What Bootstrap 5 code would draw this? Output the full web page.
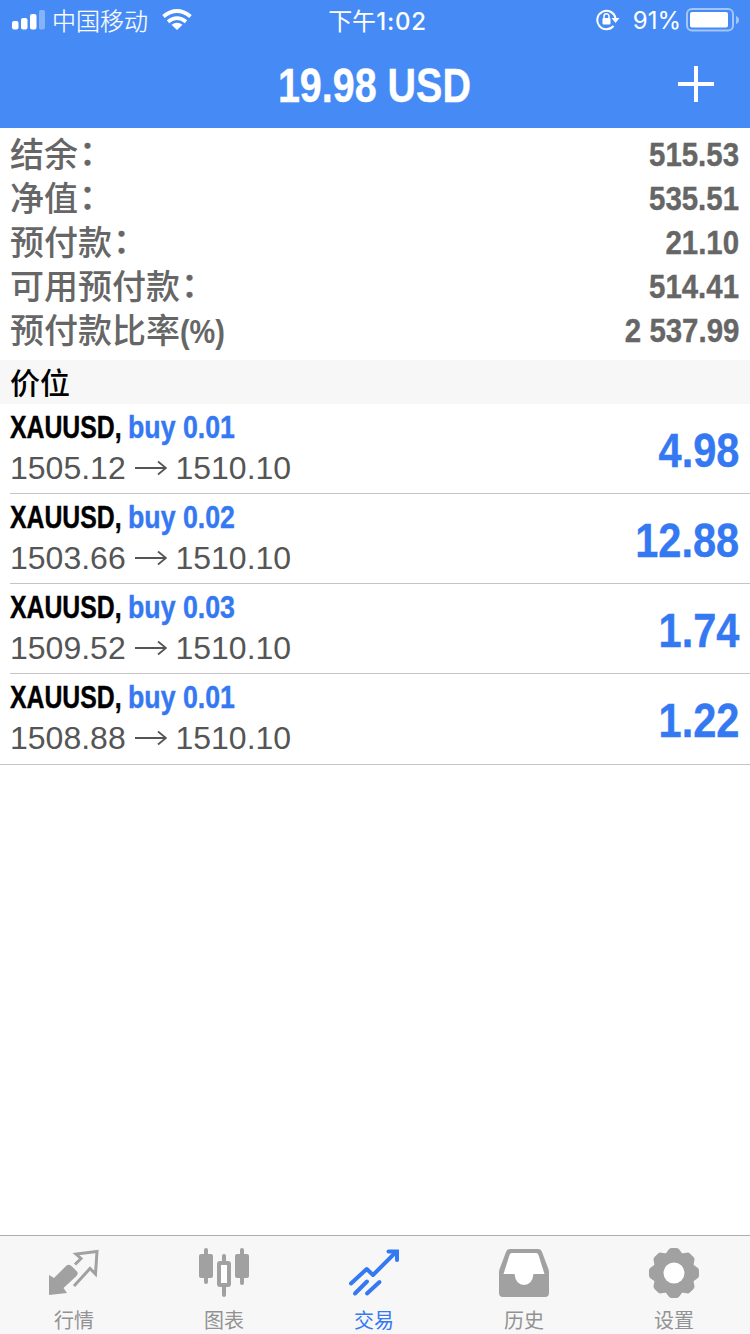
<!DOCTYPE html>
<html lang="zh-CN">
<head>
<meta charset="utf-8">
<meta name="viewport" content="width=device-width, initial-scale=1">
<title>交易</title>
<link href="https://cdn.jsdelivr.net/npm/bootstrap@5.3.0/dist/css/bootstrap.min.css" rel="stylesheet">
<style>
:root{--sky:#468bf5;--buy:#3478f2}
body{font-family:"Liberation Sans","Noto Sans CJK SC",sans-serif;color:#000;background:#fff;overflow:hidden}
/* condensed bold: regular-width glyphs squeezed horizontally */
.cond{display:inline-block;font-family:"Liberation Sans",sans-serif;font-weight:700;white-space:pre;transform:scaleX(.865);transform-origin:right center;-webkit-text-stroke:.4px currentColor}
.cjk{font-family:"Noto Sans CJK SC",sans-serif}
.topbar{background:var(--sky);height:128px}
.status{height:40px;font:24px/40px Inter,"Noto Sans CJK SC",sans-serif}
.status .side{width:300px}
.carrier{margin-left:6px;font-weight:300;-webkit-text-stroke:.2px currentColor}
.clock{padding:2px 0 0 5px;white-space:nowrap}
.clock b{font-weight:500;letter-spacing:.8px}
.title-row{height:88px}
.title-row .plus{width:108px}
.total{font-size:48px;line-height:88px;padding-top:3px;transform:translateX(-1px) scaleX(.822);transform-origin:center}
.summary{padding:4px 11px 8px 10px;color:#666}
.summary .item{height:44px;line-height:44px;font-size:34px}
.summary .lbl{font-weight:500;line-height:42px}
/* raised full-width colon */
.colon{display:inline-block;height:42px;vertical-align:top;margin:-2px 0 0 1px;-webkit-text-stroke:.4px currentColor}
.unit{transform-origin:left center;transform:scaleX(.85);-webkit-text-stroke:0}
.section{height:44px;line-height:42px;font-size:30px;font-weight:500;background:#f7f7f7;padding-left:10px}
.pos{height:90px;margin-left:10px;padding-right:11px;border-bottom:1px solid #c4c4c6}
.pos:last-child{height:91px;margin-left:0;padding-left:10px}
.sym{font-size:32px;line-height:40px;height:44px;padding-top:3px;white-space:nowrap}
.sym .cond{transform-origin:left center}
.sym .tick{transform:scaleX(.775);margin-right:-35px}
.sym .side-lot{transform:scaleX(.835)}
.buy{color:var(--buy)}
.price{font-size:32px;line-height:40px;color:#555}
.price svg{vertical-align:1px}
.profit{font-size:48px;line-height:94px}
.tabs{height:99px;background:#f7f7f8;border-top:1px solid #adadad;color:#8e8e93}
.tabs .tab{width:150px;padding:12px 2px 0 0;font-size:20px;line-height:28px;color:#929292}
.tabs .tab svg{color:#a1a1a1;margin-bottom:8px}
.tabs .on,.tabs .on svg{color:var(--buy)}
</style>
</head>
<body class="vh-100 d-flex flex-column">
<svg class="d-none"><defs><symbol id="arrow" viewBox="0 0 32 20"><path d="M0 10H30.500M23 3.500L31 10L23 16.500" fill="none" stroke="#555" stroke-width="1.800"/></symbol></defs></svg>
<header class="topbar text-white">
  <div class="status d-flex justify-content-between">
    <div class="side d-flex align-items-center ps-2">
      <svg class="ms-1" width="34" height="20" fill="#fff"><rect y="11" width="6.500" height="8.500" rx="2"/><rect x="9" y="8" width="6.500" height="11.500" rx="2"/><rect x="18" y="4" width="6.500" height="15.500" rx="2"/><rect x="27" y="0" width="6" height="19.500" rx="2" opacity=".35"/></svg>
      <span class="carrier cjk">中国移动</span>
      <svg style="margin-left:14px" width="30" height="22" viewBox="0 0 30 22"><g fill="none" stroke="#fff" stroke-width="3.800"><path d="M1.500 7.500Q15-3.500 28.500 7.500M6 12.700Q15 5.500 24 12.700"/></g><path d="M9.500 15.800Q15 11.500 20.500 15.800L15 21Z" fill="#fff"/></svg>
    </div>
    <div class="clock">下午<b>1:02</b></div>
    <div class="side d-flex align-items-center justify-content-end">
      <svg width="24" height="22" viewBox="0 0 24 22"><path d="M17.500 17A9.200 9.200 0 1 1 19.500 9" fill="none" stroke="#fff" stroke-width="2"/><path d="M15.500 9H23.500L19.500 14Z" fill="#fff"/><rect x="6.500" y="9" width="8" height="6.500" rx="1" fill="#fff"/><path d="M8 9V7.200a2.500 2.500 0 0 1 5 0V9" fill="none" stroke="#fff" stroke-width="1.500"/></svg>
      <span class="pct" style="margin:2px 5px 0 13px">91%</span>
      <svg style="margin-right:9px" width="55" height="24"><rect x="1" y="1" width="46" height="21.500" rx="5" fill="none" stroke="#fff" stroke-width="2" opacity=".5"/><rect x="4" y="4" width="38" height="15.500" rx="2" fill="#fff"/><path d="M50 8q3 1 3 4t-3 4z" fill="#fff" opacity=".5"/></svg>
    </div>
  </div>
  <div class="title-row d-flex align-items-center justify-content-between">
    <span class="plus"></span>
    <span class="total cond">19.98 USD</span>
    <span class="plus"><svg class="d-block ms-auto" style="margin-right:36px" width="36" height="36"><path d="M18 0V36M0 18H36" stroke="#fff" stroke-width="4"/></svg></span>
  </div>
</header>
<section class="summary">
  <div class="item d-flex justify-content-between"><span class="lbl cjk">结余<span class="colon">：</span></span><span class="cond">515.53</span></div>
  <div class="item d-flex justify-content-between"><span class="lbl cjk">净值<span class="colon">：</span></span><span class="cond">535.51</span></div>
  <div class="item d-flex justify-content-between"><span class="lbl cjk">预付款<span class="colon">：</span></span><span class="cond">21.10</span></div>
  <div class="item d-flex justify-content-between"><span class="lbl cjk">可用预付款<span class="colon">：</span></span><span class="cond">514.41</span></div>
  <div class="item d-flex justify-content-between"><span class="lbl cjk">预付款比率<span class="cond unit">(%)</span></span><span class="cond">2 537.99</span></div>
</section>
<div class="section cjk">价位</div>
<main class="flex-grow-1">
  <div class="pos d-flex justify-content-between"><div><div class="sym"><span class="cond tick">XAUUSD, </span><span class="cond side-lot buy">buy 0.01</span></div><div class="price">1505.12 <svg width="32" height="20"><use href="#arrow"/></svg> 1510.10</div></div><div class="profit cond buy">4.98</div></div>
  <div class="pos d-flex justify-content-between"><div><div class="sym"><span class="cond tick">XAUUSD, </span><span class="cond side-lot buy">buy 0.02</span></div><div class="price">1503.66 <svg width="32" height="20"><use href="#arrow"/></svg> 1510.10</div></div><div class="profit cond buy">12.88</div></div>
  <div class="pos d-flex justify-content-between"><div><div class="sym"><span class="cond tick">XAUUSD, </span><span class="cond side-lot buy">buy 0.03</span></div><div class="price">1509.52 <svg width="32" height="20"><use href="#arrow"/></svg> 1510.10</div></div><div class="profit cond buy">1.74</div></div>
  <div class="pos d-flex justify-content-between"><div><div class="sym"><span class="cond tick">XAUUSD, </span><span class="cond side-lot buy">buy 0.01</span></div><div class="price">1508.88 <svg width="32" height="20"><use href="#arrow"/></svg> 1510.10</div></div><div class="profit cond buy">1.22</div></div>
</main>
<nav class="tabs d-flex cjk">
  <div class="tab d-flex flex-column align-items-center"><svg width="50" height="50" viewBox="0 0 50 50" fill="currentColor"><path d="M0 27L5 30L16 19Q19.500 15 23 18.500L27.500 23Q30 25 27.500 28L14.500 40L18 45L0 47Z"/><path d="M26 16.500L32 10.500L27 6L48 3.500L46.500 26L41 20.500L25 38" fill="none" stroke="currentColor" stroke-width="3"/></svg><span>行情</span></div>
  <div class="tab d-flex flex-column align-items-center"><svg width="50" height="50" viewBox="0 0 50 50" fill="currentColor"><rect y="6" width="14" height="24" rx="2"/><rect x="5" y="0" width="4" height="36" rx="2"/><rect x="36" y="6" width="14" height="24" rx="2"/><rect x="41" y="0" width="4" height="37" rx="2"/><rect x="20" y="15" width="10" height="22" rx="1" fill="#fff" stroke="currentColor" stroke-width="4"/><rect x="23" y="6" width="4" height="10" rx="2"/><rect x="23" y="37" width="4" height="12" rx="2"/></svg><span>图表</span></div>
  <div class="tab on d-flex flex-column align-items-center"><svg width="50" height="50" viewBox="0 0 50 50" fill="none" stroke="currentColor" stroke-width="4"><path d="M2 35.500L17.700 21L24 27L47 4" stroke-linejoin="round" stroke-linecap="round"/><path d="M39.500 3.500H48V12" stroke-linecap="round"/><path d="M6 45.500L18 33.500M18 45.500L30.500 34" stroke-linecap="round"/></svg><span>交易</span></div>
  <div class="tab d-flex flex-column align-items-center"><svg width="50" height="50" viewBox="0 0 50 50" fill="currentColor"><path d="M11 1H39Q42 1 43 4L49 20Q50 22 50 25V45Q50 49 46 49H4Q0 49 0 45V25Q0 22 1 20L7 4Q8 1 11 1Z"/><path d="M13 5H37Q39 5 39.500 7L45.500 26H35Q34 26 34 28A9 9 0 0 1 16 28Q16 26 15 26H4.500L10.500 7Q11 5 13 5Z" fill="#fff"/></svg><span>历史</span></div>
  <div class="tab d-flex flex-column align-items-center"><svg width="50" height="50" viewBox="-25 -25 50 50" fill="currentColor"><defs><path id="tooth" d="M-8.500 -19L-5.500 -23.300Q-4.500 -25 -2.500 -25H2.500Q4.500 -25 5.500 -23.300L8.500 -19V19L5.500 23.300Q4.500 25 2.500 25H-2.500Q-4.500 25 -5.500 23.300L-8.500 19Z"/></defs><circle r="20.800"/><use href="#tooth"/><use href="#tooth" transform="rotate(45)"/><use href="#tooth" transform="rotate(90)"/><use href="#tooth" transform="rotate(135)"/><circle r="10.500" fill="#fff"/></svg><span>设置</span></div>
</nav>
<script src="https://cdn.jsdelivr.net/npm/bootstrap@5.3.0/dist/js/bootstrap.bundle.min.js"></script>
</body>
</html>
